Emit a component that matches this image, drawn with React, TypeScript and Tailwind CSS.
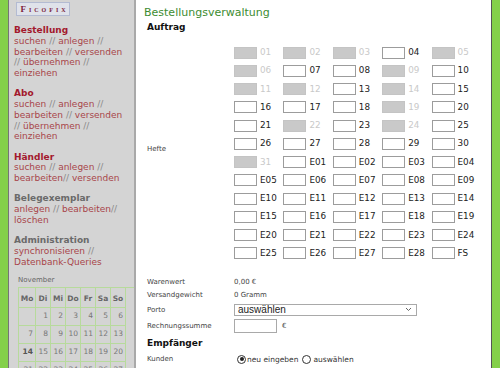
import React from "react";

const disabled = ["01", "02", "03", "05", "06", "09", "11", "12", "14", "19", "22", "24", "31"];

const hefte: string[] = [];
for (let i = 1; i <= 31; i++) hefte.push(String(i).padStart(2, "0"));
for (let i = 1; i <= 28; i++) hefte.push("E" + String(i).padStart(2, "0"));
hefte.push("FS");

const Sep = () => <span className="text-[#8a8a8a]">//</span>;
const L = ({ children }: { children: React.ReactNode }) => (
    <span className="text-[#a8454a]">{children}</span>
);

const Section = ({
    title,
    dark,
    lines,
}: {
    title: string;
    dark?: boolean;
    lines: React.ReactNode[];
}) => (
    <div className="mb-[9.5px]">
        <div className={`font-bold ${dark ? "text-[#a3192d]" : "text-[#6a6a6a]"}`}>{title}</div>
        {lines.map((l, i) => (
            <div key={i} className="whitespace-nowrap">
                {l}
            </div>
        ))}
    </div>
);

const calRows = [
    ["", "1", "2", "3", "4", "5", "6"],
    ["7", "8", "9", "10", "11", "12", "13"],
    ["14", "15", "16", "17", "18", "19", "20"],
    ["21", "22", "23", "24", "25", "26", "27"],
];

const Sidebar = () => (
    <aside className="w-[128px] shrink-0 bg-[#d4d4d4] border-l border-[#757575] border-r-2 border-r-[#a9a9a9] pl-[5px] text-[9px] leading-[10.75px] font-['DejaVu_Sans',sans-serif]">
        <div className="mt-[2px] ml-[2px] w-[54px] h-[14px] bg-[#dfe2ea] border border-[#b3bbd2] flex items-center justify-center">
            <span className="font-['Liberation_Serif',serif] font-bold text-[9px] tracking-[3px] text-[#7c1e3c] [font-variant:small-caps] leading-none pl-[3px]">
                Ficofix
            </span>
        </div>
        <div className="mt-[9px]">
            <Section
                title="Bestellung"
                dark
                lines={[
                    <><L>suchen</L> <Sep /> <L>anlegen</L> <Sep /></>,
                    <><L>bearbeiten</L> <Sep /> <L>versenden</L></>,
                    <><Sep /> <L>übernehmen</L> <Sep /></>,
                    <L>einziehen</L>,
                ]}
            />
            <Section
                title="Abo"
                dark
                lines={[
                    <><L>suchen</L> <Sep /> <L>anlegen</L> <Sep /></>,
                    <><L>bearbeiten</L> <Sep /> <L>versenden</L></>,
                    <><Sep /> <L>übernehmen</L> <Sep /></>,
                    <L>einziehen</L>,
                ]}
            />
            <Section
                title="Händler"
                dark
                lines={[
                    <><L>suchen</L> <Sep /> <L>anlegen</L> <Sep /></>,
                    <><L>bearbeiten</L><Sep /> <L>versenden</L></>,
                ]}
            />
            <Section
                title="Belegexemplar"
                lines={[
                    <><L>anlegen</L> <Sep /> <L>bearbeiten</L><Sep /></>,
                    <L>löschen</L>,
                ]}
            />
            <Section
                title="Administration"
                lines={[
                    <><L>synchronisieren</L> <Sep /></>,
                    <L>Datenbank-Queries</L>,
                ]}
            />
        </div>
        <div className="ml-[4px] -mt-[2px] text-[7px] leading-[10px] text-[#666]">November</div>
        <div className="ml-[4px] mt-[2px] grid grid-cols-[17px_repeat(6,15px)] border-t border-l border-[#b7da9c] text-[7.5px] text-[#777]">
            {["Mo", "Di", "Mi", "Do", "Fr", "Sa", "So"].map((d) => (
                <div
                    key={d}
                    className="h-[20px] pt-[4px] flex items-center justify-center border-r border-b border-[#b7da9c] font-bold text-[#666]"
                >
                    {d}
                </div>
            ))}
            {calRows.flat().map((d, i) => (
                <div
                    key={i}
                    className={`h-[18px] flex items-center justify-end pr-[2px] border-r border-b border-[#b7da9c] ${
                        d === "14" ? "font-bold text-[#555]" : ""
                    }`}
                >
                    {d}
                </div>
            ))}
        </div>
    </aside>
);

const Heft = ({ id }: { id: string }) => {
    const off = disabled.includes(id);
    return (
        <div className="flex items-center">
            <span
                className={`w-[23px] h-[12px] border ${
                    off ? "bg-[#c9c9c9] border-[#c4c4c4]" : "bg-white border-[#9c9c9c]"
                }`}
            />
            <span className={`ml-[3px] text-[8.8px] ${off ? "text-[#c9c9c9]" : "text-[#222]"}`}>{id}</span>
        </div>
    );
};

const Radio = ({ on }: { on?: boolean }) => (
    <span className="w-[9px] h-[9px] rounded-full border border-[#333] bg-white flex items-center justify-center">
        {on && <span className="w-[4px] h-[4px] rounded-full bg-[#222]" />}
    </span>
);

const Row = ({ label, h, children }: { label: string; h: string; children?: React.ReactNode }) => (
    <div className={`flex items-center ${h}`}>
        <div className="w-[87px] shrink-0 text-[#444]">{label}</div>
        <div className="flex items-center text-[#444]">{children}</div>
    </div>
);

const App = () => {
    return (
        <div className="w-[500px] h-[368px] overflow-hidden flex bg-[#84d04a] font-['DejaVu_Sans',sans-serif]">
            <div className="w-[8px] shrink-0 bg-[#84d04a]" />
            <Sidebar />
            <main className="w-[356px] shrink-0 bg-white border-r border-[#555] pl-[8px] pt-[6px]">
                <h1 className="text-[11px] leading-[14px] text-[#3d8c31]">Bestellungsverwaltung</h1>
                <div className="pl-[3px]">
                    <h2 className="mt-[1px] text-[9px] leading-[12px] font-bold text-[#111]">Auftrag</h2>
                    <div className="mt-[10.6px] flex items-center text-[7px]">
                        <div className="w-[87px] shrink-0 text-[#444] -mt-[8px]">Hefte</div>
                        <div className="grid grid-cols-[repeat(5,49.4px)] auto-rows-[18.25px]">
                            {hefte.map((id) => (
                                <Heft key={id} id={id} />
                            ))}
                        </div>
                    </div>
                    <div className="mt-[13.4px] text-[7px]">
                        <Row label="Warenwert" h="h-[12.7px]">0,00 €</Row>
                        <Row label="Versandgewicht" h="h-[12.7px]">0 Gramm</Row>
                        <Row label="Porto" h="h-[17px]">
                            <div className="w-[183px] h-[12px] border border-[#a9a9a9] flex items-center justify-between pl-[3px] pr-[4px] font-['Liberation_Sans',sans-serif] text-[10px] text-[#222]">
                                <span className="leading-none">auswählen</span>
                                <svg width="7" height="5" viewBox="0 0 7 5">
                                    <path d="M1 1 L3.5 3.5 L6 1" fill="none" stroke="#666" strokeWidth="1" />
                                </svg>
                            </div>
                        </Row>
                        <Row label="Rechnungssumme" h="h-[16px]">
                            <span className="w-[43px] h-[14px] border border-[#a9a9a9] bg-white" />
                            <span className="ml-[5px]">€</span>
                        </Row>
                        <h2 className="h-[18px] flex items-center text-[9px] font-bold text-[#111]">Empfänger</h2>
                        <Row label="Kunden" h="h-[14px]">
                            <span className="ml-[3px]">
                                <Radio on />
                            </span>
                            <span className="ml-[1px] text-[7.5px] text-[#333]">neu eingeben</span>
                            <span className="ml-[4px]">
                                <Radio />
                            </span>
                            <span className="ml-[2px] text-[7.5px] text-[#333]">auswählen</span>
                        </Row>
                    </div>
                </div>
            </main>
            <div className="flex-1 bg-[#84d04a]" />
        </div>
    );
};

export default App;
